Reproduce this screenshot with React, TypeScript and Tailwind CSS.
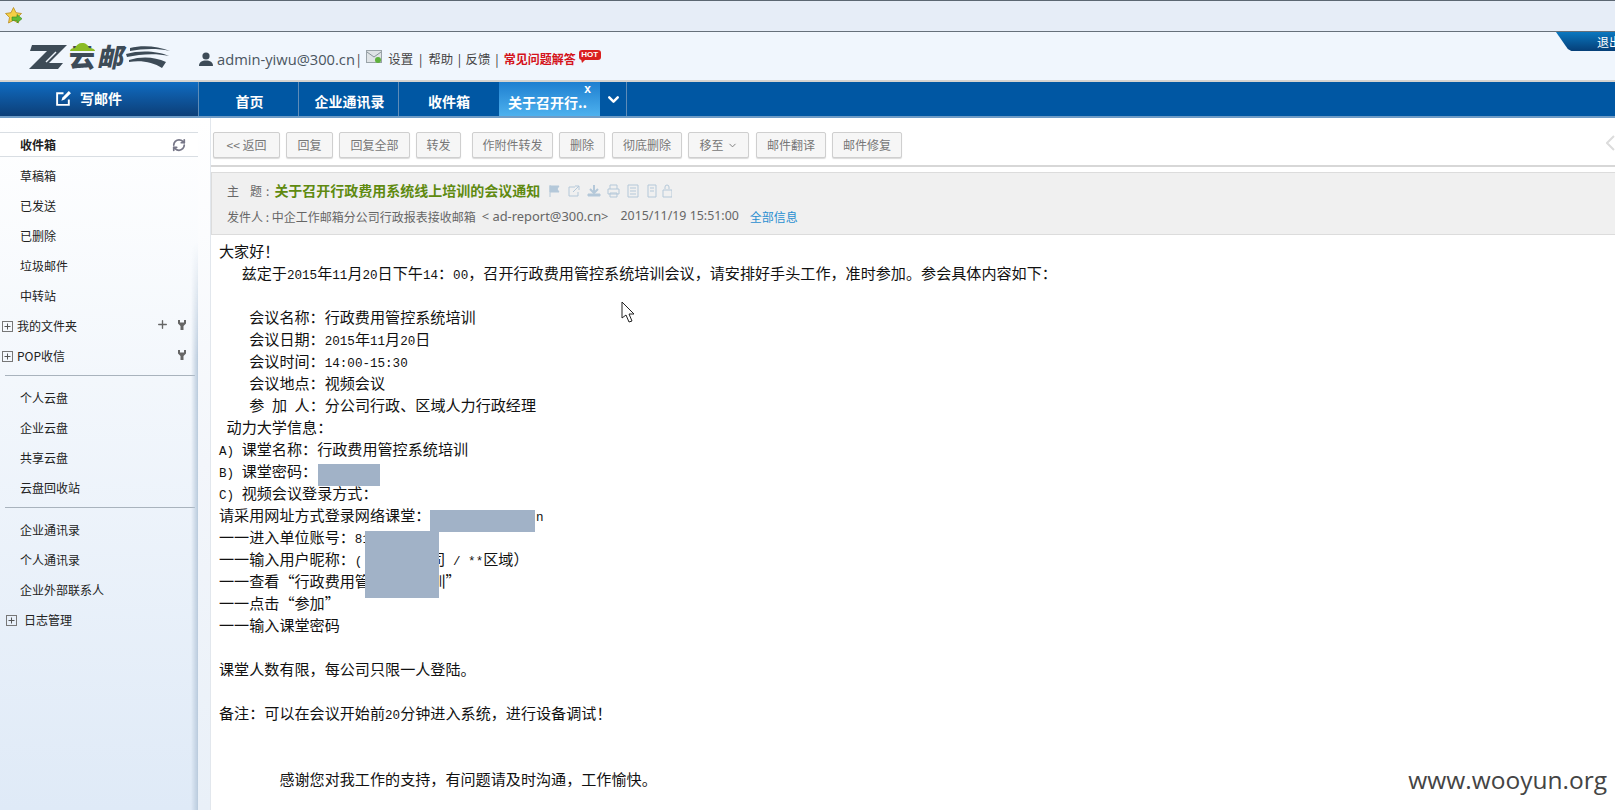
import React from "react";
import { ChevronDown, Plus, RefreshCw } from "lucide-react";

const UI = "font-['Noto_Sans_CJK_SC','Noto_Sans',sans-serif]";

function Mixed({ s }: { s: string }) {
  const parts = s.split(/([\x00-\x7f]+)/).filter(Boolean);
  return (
    <>
      {parts.map((p, i) =>
        /^[\x00-\x7f]/.test(p) ? (
          <span key={i} className="font-['Liberation_Mono',monospace] text-[12.580px]">{p}</span>
        ) : (
          <span key={i}>{p}</span>
        )
      )}
    </>
  );
}

const bodyLines = [
  "大家好！",
  "   兹定于2015年11月20日下午14：00，召开行政费用管控系统培训会议，请安排好手头工作，准时参加。参会具体内容如下：",
  "",
  "    会议名称：行政费用管控系统培训",
  "    会议日期：2015年11月20日",
  "    会议时间：14:00-15:30",
  "    会议地点：视频会议",
  "    参 加 人：分公司行政、区域人力行政经理",
  " 动力大学信息：",
  "A) 课堂名称：行政费用管控系统培训",
  "B) 课堂密码：",
  "C) 视频会议登录方式：",
  "请采用网址方式登录网络课堂：              n",
  "一一进入单位账号：81",
  "一一输入用户昵称：(         司 / **区域）",
  "一一查看“行政费用管        训”",
  "一一点击“参加”",
  "一一输入课堂密码",
  "",
  "课堂人数有限，每公司只限一人登陆。",
  "",
  "备注：可以在会议开始前20分钟进入系统，进行设备调试！",
  "",
  "",
  "        感谢您对我工作的支持，有问题请及时沟通，工作愉快。",
];

const buttons = [
  { t: "<< 返回", w: 67, m: 0 },
  { t: "回复", w: 47, m: 6 },
  { t: "回复全部", w: 71, m: 6 },
  { t: "转发", w: 45, m: 6 },
  { t: "作附件转发", w: 81, m: 11 },
  { t: "删除", w: 46, m: 6 },
  { t: "彻底删除", w: 70, m: 7 },
  { t: "移至", w: 61, m: 6 },
  { t: "邮件翻译", w: 70, m: 7 },
  { t: "邮件修复", w: 70, m: 6 },
];

function Item({ t, bold }: { t: string; bold?: boolean }) {
  return <div className={`h-[30px] pl-5 flex items-center text-[12px] text-[#222] ${bold ? "font-bold" : ""}`}>{t}</div>;
}

function Box() {
  return (
    <svg width="11" height="11" viewBox="0 0 11 11" className="shrink-0">
      <rect x="0.5" y="0.5" width="10" height="10" fill="none" stroke="#777" />
      <path d="M2.5 5.5h6M5.5 2.5v6" stroke="#555" />
    </svg>
  );
}

function Fork() {
  return (
    <svg width="8" height="10" viewBox="0 0 8 10" className="shrink-0 mb-[3px]">
      <path d="M0 0h2v2.500h4V0h2v3.500L5.500 6v4h-3V6L0 3.500z" fill="#666" />
    </svg>
  );
}

function Divider() {
  return <div className="h-px bg-[#a9b3bd] ml-[5px] mr-[3px] my-[4px]" />;
}

export default function App() {
  return (
    <div className={`w-[1615px] h-[810px] overflow-hidden flex flex-col bg-white relative ${UI}`}>
      {/* browser favourites strip */}
      <div className="h-[32px] shrink-0 bg-[#e6edf7] border-t border-t-[#5c6772] border-b border-b-[#66707a] flex items-center pl-[5px]">
        <svg width="18" height="18" viewBox="0 0 18 18">
          <path d="M8.500 0.500l2.500 5.200 5.500.8-4 3.900 1 5.600-5-2.700-5 2.700 1-5.600-4-3.900 5.500-.8z" fill="#f5cf45" stroke="#b98a1c" strokeWidth="0.8" />
          <path d="M7 10h5V7.500l5 4.200-5 4.200V13.500H7z" fill="#62bb35" stroke="#3a8a1f" strokeWidth="0.6" />
        </svg>
      </div>

      {/* header */}
      <div className="h-[50px] shrink-0 bg-[#f0f6fd] flex items-center relative border-b-2 border-b-[#d5d3d0]">
        <div className="w-[199px] shrink-0 pl-[29px] flex items-center relative">
          <svg width="38" height="24" viewBox="0 0 38 24" className="mt-[2px]">
            <path d="M3 0h35L20 18h14l-5 6H0L18 6H1z" fill="#3d4b57" />
            <path d="M17 17L27 7" stroke="#f0f6fd" strokeWidth="1.500" />
          </svg>
          <span className="relative w-[28px] text-[26px] font-black leading-none text-[#3d4b57] ml-[2px]">
            云
            <svg width="27" height="10" viewBox="0 0 27 10" className="absolute left-0 top-[-2px]">
              <path d="M1 10c0-2 2-3 5-3 1-3 4-5 7-5 4 0 6 2 7 5 3 0 6 1 6 3z" fill="#8bbb25" />
            </svg>
          </span>
          <span className="text-[26px] font-black leading-none text-[#3d4b57] -skew-x-12 ml-[2px]">邮</span>
          <svg width="44" height="22" viewBox="0 0 44 22" className="ml-[1px] mt-[2px]">
            <path d="M4 2C16 -1 32 0 44 5 30 2 16 3 4 5zM0 8C14 4 32 5 43 10 30 7 14 8 1 11zM3 14c13-4 26-3 37 2l-4 6C27 16 15 14 3 16z" fill="#3d4b57" />
          </svg>
        </div>
        <div className="flex items-center text-[12.400px] text-[#444] whitespace-nowrap mt-[6px]">
          <svg width="14" height="14" viewBox="0 0 14 14" className="mr-[4px]">
            <circle cx="7" cy="4" r="3.600" fill="#3d4b57" />
            <path d="M0 14c0-4 3-5.500 7-5.500s7 1.500 7 5.500z" fill="#3d4b57" />
          </svg>
          <span className="font-['Open_Sans',sans-serif] text-[14.700px] text-[#4a555f]">admin-yiwu@300.cn</span>
          <span className="ml-[2px] text-[#333]">|</span>
          <svg width="16" height="15" viewBox="0 0 16 15" className="ml-[6px] mr-[6px] mb-[4px]">
            <rect x="0.500" y="1.500" width="15" height="12" fill="#dfe3e5" stroke="#9aa3a8" />
            <path d="M1 3l7 5 7-5" fill="none" stroke="#8a949a" />
            <circle cx="12" cy="11" r="3" fill="#5fb13c" />
          </svg>
          <span>设置</span>
          <span className="mx-[6px] text-[#333]">|</span>
          <span>帮助</span>
          <span className="mx-[4.500px] text-[#333]">|</span>
          <span>反馈</span>
          <span className="ml-[5px] mr-[4px] text-[#333]">|</span>
          <span className="text-[#d4121a] font-bold text-[12px] ml-[1px]">常见问题解答</span>
          <span className="relative ml-[3px] mb-[7px] bg-[#d92020] text-white text-[8px] font-bold leading-[10px] h-[10px] w-[22px] text-center rounded-[3px] font-['Liberation_Sans',sans-serif]">
            HOT
            <svg width="5" height="4" viewBox="0 0 5 4" className="absolute left-[2px] top-[9px]">
              <path d="M0 0h5L1 4z" fill="#d92020" />
            </svg>
          </span>
        </div>
        <div className="absolute right-0 top-0 w-[59px] h-[19px] bg-gradient-to-b from-[#0a78c0] to-[#063f78] [clip-path:polygon(0_0,100%_0,100%_100%,26%_100%,20%_90%)] text-white text-[12px] leading-[19px] pl-[41px] overflow-hidden whitespace-nowrap">退出</div>
      </div>

      {/* nav */}
      <div className="h-[36px] shrink-0 bg-[#0057a3] flex text-white border-b-2 border-b-[#6f9cc6]">
        <div className="w-[199px] shrink-0 bg-gradient-to-b from-[#0f6cc2] to-[#0c3f78] flex items-center justify-center gap-[8px] text-[14px] font-bold border-r border-r-[#5e8cb8] pr-[21px] pb-[2px]">
          <svg width="17" height="17" viewBox="0 0 16 16" fill="none" stroke="#fff" strokeWidth="1.800">
            <path d="M13 9v5H2V3h6" />
            <path d="M6 10l1-3 6-6 2 2-6 6z" fill="#fff" stroke="none" />
          </svg>
          <span>写邮件</span>
        </div>
        <div className="w-[100px] flex items-center justify-center text-[14px] font-bold border-r border-r-[#5e8cb8] pt-[4px] pl-[2px]">首页</div>
        <div className="w-[100px] flex items-center justify-center text-[14px] font-bold border-r border-r-[#5e8cb8] pt-[4px] pl-[2px]">企业通讯录</div>
        <div className="w-[100px] flex items-center justify-center text-[14px] font-bold pt-[4px]">收件箱</div>
        <div className="w-[101px] relative bg-gradient-to-b from-[#1d7fd0] to-[#4db1ee] flex items-center justify-center text-[14px] font-bold pt-[6px] pr-[4px] whitespace-nowrap">
          <span className="leading-[18px]">关于召开行..</span>
          <span className="absolute right-[9px] top-[3px] text-[12px] leading-[9px] font-['Liberation_Sans',sans-serif]">x</span>
        </div>
        <div className="w-[27px] flex items-center justify-center border-r border-r-[#5e8cb8]">
          <ChevronDown className="w-[17px] h-[17px]" strokeWidth={3.500} />
        </div>
      </div>

      {/* main */}
      <div className="flex-1 min-h-0 flex">
        {/* sidebar */}
        <div className="w-[198px] shrink-0 relative bg-gradient-to-b from-white to-[#dfeaf7] pt-[14px]">
          <div className="absolute right-0 top-0 bottom-0 w-[7px] bg-[linear-gradient(to_right,transparent,#b9cadc)] [mask-image:linear-gradient(to_bottom,transparent_18%,black_35%)]" />
          <div className="h-[25px] pl-5 pr-[12px] flex items-center justify-between text-[12px] font-bold text-[#222] border-t border-b border-[#d9dee3] bg-white">
            <span>收件箱</span>
            <RefreshCw className="w-[14px] h-[14px] text-[#778]" strokeWidth={3} />
          </div>
          <div className="pt-[4px]">
            <Item t="草稿箱" />
            <Item t="已发送" />
            <Item t="已删除" />
            <Item t="垃圾邮件" />
            <Item t="中转站" />
          </div>
          <div className="h-[30px] pl-[2px] pr-[12px] flex items-center text-[12px] text-[#222]">
            <Box />
            <span className="ml-[4px] flex-1">我的文件夹</span>
            <Plus className="w-[13px] h-[13px] text-[#666] mr-[9px] mb-[3px]" strokeWidth={2.500} />
            <Fork />
          </div>
          <div className="h-[30px] pl-[2px] pr-[12px] flex items-center text-[12px] text-[#222]">
            <Box />
            <span className="ml-[4px] flex-1">POP收信</span>
            <Fork />
          </div>
          <Divider />
          <div className="pt-[3px]">
            <Item t="个人云盘" />
            <Item t="企业云盘" />
            <Item t="共享云盘" />
            <Item t="云盘回收站" />
          </div>
          <Divider />
          <div className="pt-[3px]">
            <Item t="企业通讯录" />
            <Item t="个人通讯录" />
            <Item t="企业外部联系人" />
          </div>
          <div className="h-[30px] pl-[6px] flex items-center text-[12px] text-[#222]">
            <Box />
            <span className="ml-[7px]">日志管理</span>
          </div>
        </div>

        {/* gutter */}
        <div className="w-[13px] shrink-0 bg-gradient-to-b from-white via-[#f3f6fb] to-[#e9f0f8] border-r border-r-[#e2e7ed]" />

        {/* content */}
        <div className="flex-1 min-w-0 flex flex-col">
          <div className="h-[49px] shrink-0 flex items-start pt-[14px] pl-[2px] border-b-2 border-b-[#d7d7d7] relative">
            {buttons.map((b) => (
              <div
                key={b.t}
                style={{ width: b.w, marginLeft: b.m }}
                className="h-[26px] shrink-0 flex items-center justify-center gap-[3px] text-[12px] text-[#777] bg-[#f6f6f6] border border-[#cfcfcf] rounded-[2px] shadow-[0_1px_1px_rgba(0,0,0,0.15)]"
              >
                {b.t}
                {b.t === "移至" && <ChevronDown className="w-[11px] h-[11px]" />}
              </div>
            ))}
            <svg width="9" height="16" viewBox="0 0 9 16" className="absolute right-0 top-[17px]">
              <path d="M8 1L1 8l7 7" fill="none" stroke="#dcdcdc" strokeWidth="2" />
            </svg>
          </div>
          <div className="h-[63px] shrink-0 mt-[5px] bg-[#f0f0f0] border-t border-t-[#dcdcdc] border-b border-b-[#dcdcdc] border-l border-l-[#dcdcdc] pl-[15px] flex flex-col justify-center gap-[9px]">
            <div className="flex items-center text-[12px] text-[#666] h-[17px]">
              <span>主</span>
              <span className="ml-[11px]">题</span>
              <span className="ml-[4px]">:</span>
              <span className="ml-[5px] text-[#5f8a10] font-bold text-[14px]">关于召开行政费用系统线上培训的会议通知</span>
              <svg width="124" height="14" viewBox="0 0 124 14" className="ml-[8px]" fill="none" stroke="#b4c8d9">
                <path d="M2 1v12M2 2h9l-2 3 2 3H2z" fill="#b4c8d9" />
                <path d="M27 3h-6v9h9V8M25 8l6-6M27 2h4v4" />
                <path d="M46 1v7M42 5l4 4 4-4" strokeWidth="2" />
                <path d="M40 10h12v2H40z" fill="#b4c8d9" />
                <path d="M62 5V1h7v4M60 5h11v5H60zM62 9h7v4h-7z" />
                <path d="M80 1h10v12H80zM82 4h6M82 7h6M82 10h6" />
                <path d="M100 1h8v12h-8zM102 4h4M102 7h4" />
                <path d="M117 5V3a2 2 0 0 1 4 0v2M115 6h9v7h-9z" />
              </svg>
            </div>
            <div className="flex items-center text-[12px] text-[#666] h-[17px] whitespace-pre">
              <span>发件人 : 中企工作邮箱分公司行政报表接收邮箱</span>
              <span className="ml-[6px] text-[12.900px] font-['Noto_Sans',sans-serif]">&lt; ad-report@300.cn&gt;</span>
              <span className="ml-[12px] text-[12.400px] font-['Noto_Sans',sans-serif]">2015/11/19 15:51:00</span>
              <span className="ml-[11px] text-[#2a8fd0]">全部信息</span>
            </div>
          </div>
          <div className="flex-1 min-h-0 pl-[8px] pt-[4px] text-[15.100px] leading-[22px] text-[#111] whitespace-pre">
            {bodyLines.map((l, i) => (
              <div key={i} className="h-[22px]">
                <Mixed s={l} />
              </div>
            ))}
          </div>
        </div>
      </div>

      {/* redaction blocks lying over the text */}
      <div className="absolute left-[318px] top-[464px] w-[62px] h-[22px] bg-[#a1b2c7]" />
      <div className="absolute left-[430px] top-[510px] w-[105px] h-[22px] bg-[#a1b2c7]" />
      <div className="absolute left-[365px] top-[531px] w-[74px] h-[67px] bg-[#a1b2c7]" />

      {/* mouse pointer */}
      <svg width="14" height="22" viewBox="0 0 14 22" className="absolute left-[621px] top-[301px]">
        <path d="M1 1v16l4-3 3 7 3-1-3-7h5z" fill="#fff" stroke="#222" strokeWidth="1" />
      </svg>

      {/* watermark */}
      <div className="absolute right-[8px] bottom-[18px] font-['Open_Sans',sans-serif] text-[24.500px] leading-none text-[#444]">www.wooyun.org</div>
    </div>
  );
}
